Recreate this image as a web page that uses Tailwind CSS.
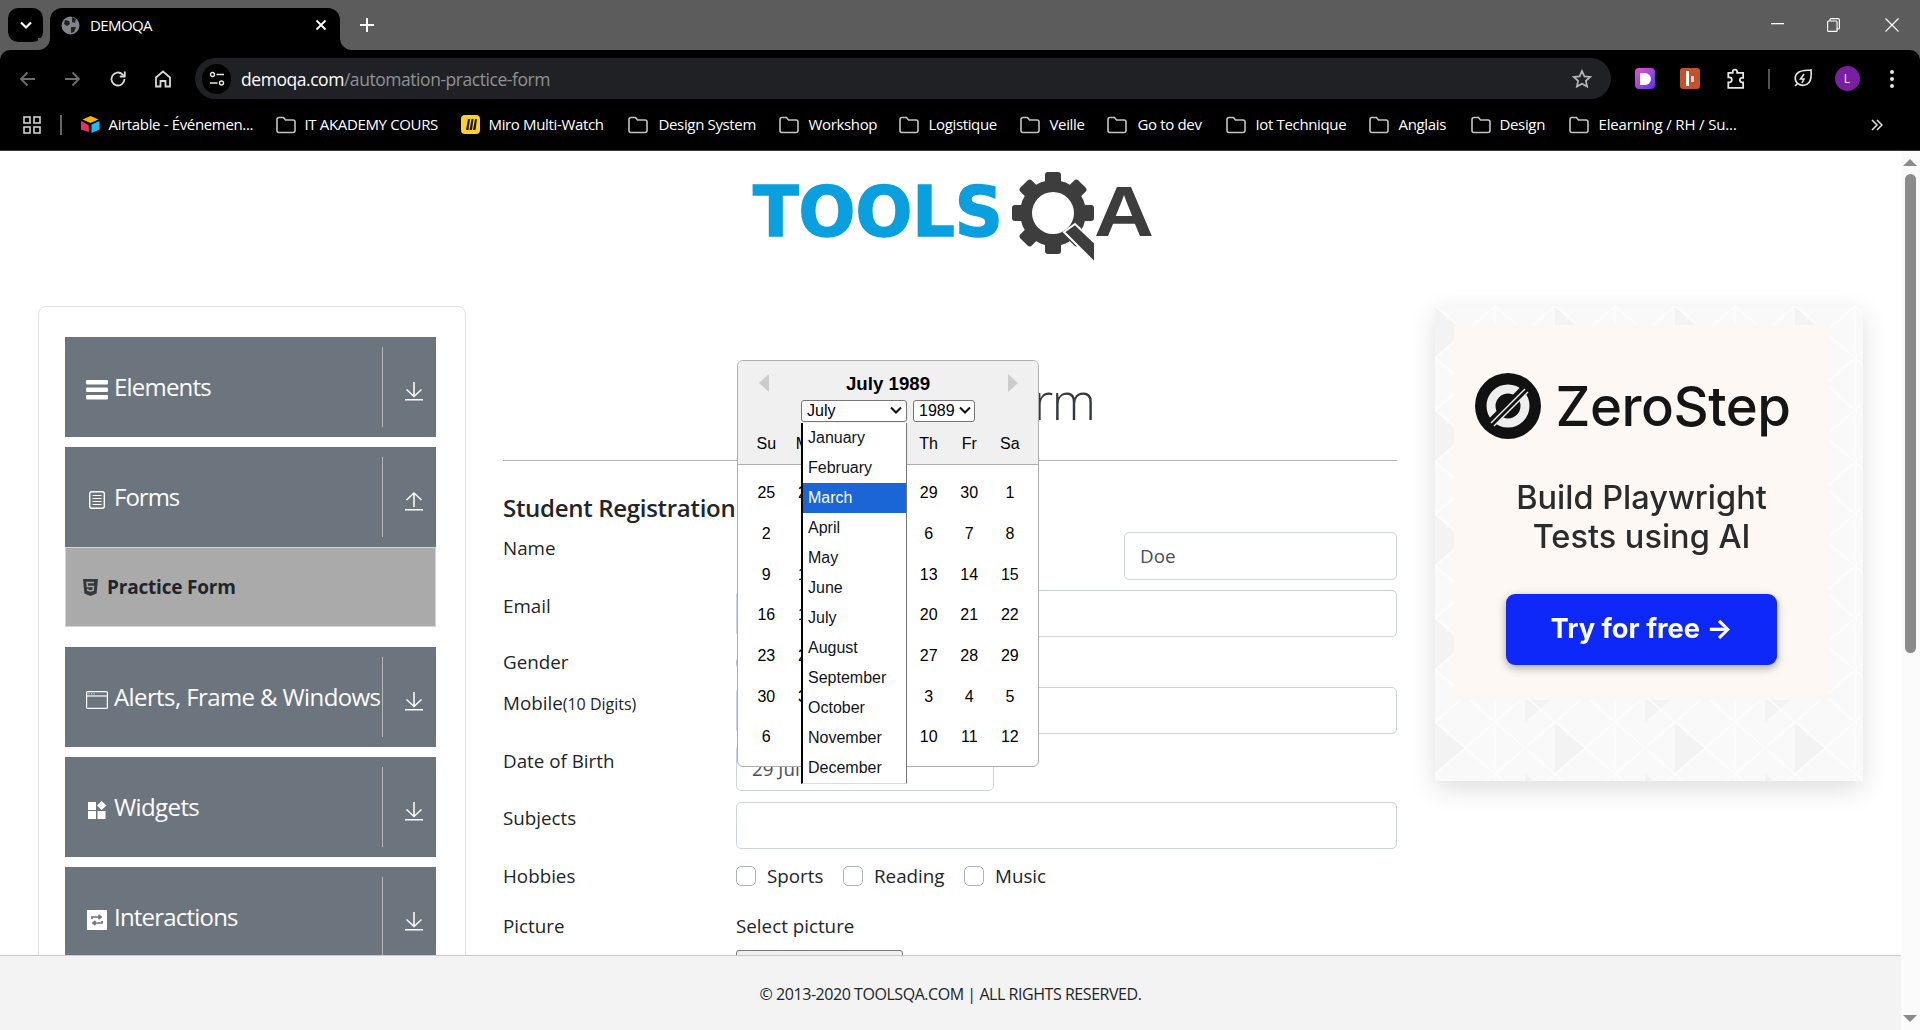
<!DOCTYPE html>
<html lang="en">
<head>
  <meta charset="UTF-8">
  <title>DEMOQA</title>
  <script src="https://cdn.jsdelivr.net/npm/@tailwindcss/browser@4"></script>
</head>
<body class="w-[1920px] h-[1030px] overflow-hidden flex flex-col bg-white text-[#212529] font-['Open_Sans',sans-serif]">

  <!-- browser tab strip -->
  <div class="h-[50px] shrink-0 bg-[#5c5c5c] flex items-start pt-[8px] pl-[8px] text-white relative">
    <div class="w-[35px] h-[34px] bg-black rounded-[10px] flex items-center justify-center">
      <svg width="14" height="14" viewBox="0 0 14 14" fill="none" stroke="#fff" stroke-width="2.2"><path d="M2 4.500l5 5 5-5"/></svg>
    </div>
    <div class="relative ml-[7px] w-[290px] h-[42px] bg-black rounded-t-[12px] flex items-center pl-[11px] pr-[13px] pb-[8px]">
      <div class="absolute right-full bottom-0 w-[12px] h-[12px] bg-black"><div class="w-full h-full bg-[#5c5c5c] rounded-br-[12px]"></div></div>
      <div class="absolute left-full bottom-0 w-[12px] h-[12px] bg-black"><div class="w-full h-full bg-[#5c5c5c] rounded-bl-[12px]"></div></div>
      <svg width="19" height="19" viewBox="0 0 19 19"><circle cx="9.500" cy="9.500" r="9" fill="#80858c"/><path d="M4 4l4 1 1 3-3 2-3-2zM11 1l4 2-1 4-3-1zM10 11l5 0-2 5-3 1z" fill="#000" opacity=".75"/></svg>
      <span class="ml-[10px] text-[15px] tracking-[-0.6px]">DEMOQA</span>
      <svg class="ml-auto" width="12" height="12" viewBox="0 0 12 12" stroke="#fff" stroke-width="1.800"><path d="M1.500 1.500l9 9M10.500 1.500l-9 9"/></svg>
    </div>
    <svg class="ml-[20px] mt-[10px]" width="14" height="14" viewBox="0 0 14 14" stroke="#fff" stroke-width="2"><path d="M7 0v14M0 7h14"/></svg>
    <svg class="absolute left-[1771px] top-[23px]" width="13" height="2"><rect width="13" height="1.300" fill="#fff"/></svg>
    <svg class="absolute left-[1827px] top-[18px]" width="13" height="14" viewBox="0 0 13 14" fill="none" stroke="#fff" stroke-width="1.100"><rect x=".6" y="3" width="9.500" height="10.400" rx="1"/><path d="M3 3V1.600q0-1 1-1h7q1.400 0 1.400 1.400v8q0 1-1 1h-2"/></svg>
    <svg class="absolute left-[1885px] top-[18px]" width="14" height="14" viewBox="0 0 14 14" stroke="#fff" stroke-width="1.200"><path d="M.5.500l13 13M13.500.500l-13 13"/></svg>
  </div>

  <!-- toolbar -->
  <div class="h-[50px] shrink-0 bg-[#5c5c5c]">
    <div class="h-full bg-black rounded-t-[10px] flex items-center relative pt-[8px] pb-[1px]">
      <svg class="ml-[18px]" width="20" height="20" viewBox="0 0 20 20" fill="none" stroke="#6e6e6e" stroke-width="1.800"><path d="M17 10H3M9.500 3.500L3 10l6.500 6.500"/></svg>
      <svg class="ml-[24px]" width="20" height="20" viewBox="0 0 20 20" fill="none" stroke="#6e6e6e" stroke-width="1.800"><path d="M3 10h14M10.500 3.500L17 10l-6.500 6.500"/></svg>
      <svg class="ml-[26px]" width="20" height="20" viewBox="0 0 20 20" fill="none" stroke="#d8d8d8" stroke-width="1.800"><path d="M16.500 10a6.500 6.500 0 1 1-2-4.700L16.500 7.300"/><path d="M16.800 2.500v5h-5"/></svg>
      <svg class="ml-[25px]" width="20" height="20" viewBox="0 0 20 20" fill="none" stroke="#d8d8d8" stroke-width="1.800"><path d="M3 8.500L10 2.500l7 6V17.500h-4.500V12h-5v5.500H3z"/></svg>
      <div class="ml-[22px] w-[1416px] h-[41px] bg-[#202124] rounded-full flex items-center pl-[7px] pr-[19px]">
        <div class="w-[29px] h-[30px] rounded-full bg-black flex items-center justify-center">
          <svg width="16" height="16" viewBox="0 0 16 16" fill="none" stroke="#e8e8e8" stroke-width="1.400"><circle cx="3.500" cy="3.500" r="2"/><path d="M7.500 3.500H15M1 12h7.500"/><circle cx="12.500" cy="12" r="2"/></svg>
        </div>
        <span class="ml-[10px] pt-[2px] text-[17.500px] tracking-[-0.45px] text-white">demoqa.com<span class="text-[#8f9296]">/automation-practice-form</span></span>
        <svg class="ml-auto" width="20" height="20" viewBox="0 0 20 20" fill="none" stroke="#b8b8b8" stroke-width="1.700"><path d="M10 2l2.400 5.400 5.800.6-4.300 3.900 1.200 5.700L10 14.700 4.900 17.600l1.200-5.700L1.800 8l5.800-.6z"/></svg>
      </div>
      <div class="ml-[24px] w-[20px] h-[21px] rounded-[4px] bg-gradient-to-br from-[#e84fd0] to-[#5a2de0] flex items-center justify-center">
        <div class="w-[11px] h-[12px] bg-white rounded-r-full"></div>
      </div>
      <div class="ml-[25px] w-[20px] h-[21px] rounded-[3px] bg-[#c2512d] flex items-center justify-center gap-[2px]">
        <div class="w-[3px] h-[15px] bg-white"></div><div class="w-[3px] h-[6px] bg-white/80"></div>
      </div>
      <svg class="ml-[25px]" width="22" height="22" viewBox="0 0 20 20" fill="none" stroke="#e6e6e6" stroke-width="1.600"><path d="M7 4.500V3.500a2 2 0 0 1 4 0v1h5.500v4.500h-1a2 2 0 0 0 0 4h1V18H3v-5h1a2.200 2.200 0 0 0 0-4.500H3V4.500z"/></svg>
      <div class="ml-[21px] w-[1.500px] h-[20px] bg-[#555]"></div>
      <svg class="ml-[22px]" width="21" height="21" viewBox="0 0 21 21" fill="none" stroke="#e6e6e6" stroke-width="1.600"><path d="M3 18l2.500-2.500C2 12 2.500 6.500 7 4c3.500-1.800 8-1.500 12-2 .5 5 .5 9.500-2 12.500-3 3.500-7.500 3.500-11.500 1"/><path d="M12 6l-3.500 5h3.500l-2 4"/></svg>
      <div class="ml-[22px] w-[25px] h-[25px] rounded-full bg-[#7b1fa2] flex items-center justify-center text-[12px] text-white/90">L</div>
      <svg class="ml-[29px]" width="6" height="20" viewBox="0 0 6 20" fill="#e6e6e6"><circle cx="3" cy="3" r="2"/><circle cx="3" cy="10" r="2"/><circle cx="3" cy="17" r="2"/></svg>
    </div>
  </div>

  <!-- bookmarks bar -->
  <div class="h-[51px] shrink-0 bg-black border-b border-[#3a3a3a] flex items-center pb-[1px] text-white text-[15px] tracking-[-0.35px] whitespace-nowrap">
    <svg class="ml-[23px]" width="18" height="18" viewBox="0 0 18 18" fill="none" stroke="#d0d0d0" stroke-width="1.600"><rect x="1" y="1" width="6" height="6"/><rect x="11" y="1" width="6" height="6"/><rect x="1" y="11" width="6" height="6"/><rect x="11" y="11" width="6" height="6"/></svg>
    <div class="ml-[19px] w-[1.500px] h-[20px] bg-[#666]"></div>
    <div class="ml-[19px] w-[195px] flex items-center gap-[9px]">
      <svg width="19" height="19" viewBox="0 0 19 19"><path d="M9.500 1L1.500 4.500l8 3.500 8-3.500z" fill="#fcb400"/><path d="M10.500 9.500v8.500l8-3.500V6z" fill="#18bfff"/><path d="M0 6v8.500l8 2.500-.5-7z" fill="#e8345c"/></svg>
      <span>Airtable - Événemen...</span>
    </div>
    <div class="w-[185px] flex items-center gap-[9px]">
      <svg width="20" height="18" viewBox="0 0 20 18" fill="none" stroke="#c4c4c4" stroke-width="1.600"><path d="M1 3.500q0-2 2-2h4.500l2 2.500H17q2 0 2 2V14.500q0 2-2 2H3q-2 0-2-2z"/></svg>
      <span>IT AKADEMY COURS</span>
    </div>
    <div class="w-[167px] flex items-center gap-[9px]">
      <svg width="19" height="19" viewBox="0 0 19 19"><rect width="19" height="19" rx="4" fill="#ffd02f"/><path d="M5 15L7 4h2L7.500 15zM8.500 15L10.500 4h2L11 15zM12 15L14 4h2L14.500 15z" fill="#1a1a1a"/></svg>
      <span>Miro Multi-Watch</span>
    </div>
    <div class="w-[151px] flex items-center gap-[11px]">
      <svg width="20" height="18" viewBox="0 0 20 18" fill="none" stroke="#c4c4c4" stroke-width="1.600"><path d="M1 3.500q0-2 2-2h4.500l2 2.500H17q2 0 2 2V14.500q0 2-2 2H3q-2 0-2-2z"/></svg>
      <span>Design System</span>
    </div>
    <div class="w-[120px] flex items-center gap-[10px]">
      <svg width="20" height="18" viewBox="0 0 20 18" fill="none" stroke="#c4c4c4" stroke-width="1.600"><path d="M1 3.500q0-2 2-2h4.500l2 2.500H17q2 0 2 2V14.500q0 2-2 2H3q-2 0-2-2z"/></svg>
      <span>Workshop</span>
    </div>
    <div class="w-[121px] flex items-center gap-[10px]">
      <svg width="20" height="18" viewBox="0 0 20 18" fill="none" stroke="#c4c4c4" stroke-width="1.600"><path d="M1 3.500q0-2 2-2h4.500l2 2.500H17q2 0 2 2V14.500q0 2-2 2H3q-2 0-2-2z"/></svg>
      <span>Logistique</span>
    </div>
    <div class="w-[87px] flex items-center gap-[10px]">
      <svg width="20" height="18" viewBox="0 0 20 18" fill="none" stroke="#c4c4c4" stroke-width="1.600"><path d="M1 3.500q0-2 2-2h4.500l2 2.500H17q2 0 2 2V14.500q0 2-2 2H3q-2 0-2-2z"/></svg>
      <span>Veille</span>
    </div>
    <div class="w-[119px] flex items-center gap-[11px]">
      <svg width="20" height="18" viewBox="0 0 20 18" fill="none" stroke="#c4c4c4" stroke-width="1.600"><path d="M1 3.500q0-2 2-2h4.500l2 2.500H17q2 0 2 2V14.500q0 2-2 2H3q-2 0-2-2z"/></svg>
      <span>Go to dev</span>
    </div>
    <div class="w-[143px] flex items-center gap-[10px]">
      <svg width="20" height="18" viewBox="0 0 20 18" fill="none" stroke="#c4c4c4" stroke-width="1.600"><path d="M1 3.500q0-2 2-2h4.500l2 2.500H17q2 0 2 2V14.500q0 2-2 2H3q-2 0-2-2z"/></svg>
      <span>Iot Technique</span>
    </div>
    <div class="w-[102px] flex items-center gap-[10px]">
      <svg width="20" height="18" viewBox="0 0 20 18" fill="none" stroke="#c4c4c4" stroke-width="1.600"><path d="M1 3.500q0-2 2-2h4.500l2 2.500H17q2 0 2 2V14.500q0 2-2 2H3q-2 0-2-2z"/></svg>
      <span>Anglais</span>
    </div>
    <div class="w-[98px] flex items-center gap-[9px]">
      <svg width="20" height="18" viewBox="0 0 20 18" fill="none" stroke="#c4c4c4" stroke-width="1.600"><path d="M1 3.500q0-2 2-2h4.500l2 2.500H17q2 0 2 2V14.500q0 2-2 2H3q-2 0-2-2z"/></svg>
      <span>Design</span>
    </div>
    <div class="flex items-center gap-[10px]">
      <svg width="20" height="18" viewBox="0 0 20 18" fill="none" stroke="#c4c4c4" stroke-width="1.600"><path d="M1 3.500q0-2 2-2h4.500l2 2.500H17q2 0 2 2V14.500q0 2-2 2H3q-2 0-2-2z"/></svg>
      <span class="tracking-[-0.15px]">Elearning / RH / Su...</span>
    </div>
    <svg class="ml-[134px]" width="12" height="12" viewBox="0 0 12 12" fill="none" stroke="#e0e0e0" stroke-width="1.500"><path d="M1 1l5 5-5 5M6 1l5 5-5 5"/></svg>
  </div>

  <!-- page -->
  <div class="flex-1 flex min-h-0">
    <div class="w-[1901px] flex flex-col">
      <div class="flex-1 min-h-0 overflow-hidden">
        <header class="h-[155px] flex justify-center pt-[21px]">
          <svg width="400" height="92" viewBox="0 0 400 92" class="ml-[3px] overflow-visible">
            <text x="1" y="64" font-family="DejaVu Sans" font-weight="700" font-size="70" textLength="250" lengthAdjust="spacingAndGlyphs" fill="#0a9fdf" stroke="#0a9fdf" stroke-width="1.500">TOOLS</text>
            <g fill="#3d3d3d">
              <circle cx="301" cy="41" r="33"/>
              <rect x="293" y="0" width="16" height="82" rx="3"/>
              <rect x="293" y="0" width="16" height="82" rx="3" transform="rotate(45 301 41)"/>
              <rect x="293" y="0" width="16" height="82" rx="3" transform="rotate(90 301 41)"/>
              <rect x="293" y="0" width="16" height="82" rx="3" transform="rotate(135 301 41)"/>
            </g>
            <circle cx="301" cy="41" r="21" fill="#fff"/>
            <path d="M312 60l11-8 20 19v20z" fill="#3d3d3d" stroke="#fff" stroke-width="2"/>
            <text x="342" y="64" font-family="Liberation Sans" font-weight="700" font-size="71" textLength="60" lengthAdjust="spacingAndGlyphs" fill="#3d3d3d">A</text>
          </svg>
        </header>
        <div class="flex pl-[38px]">

          <!-- left menu -->
          <aside class="w-[428px] shrink-0 border border-[#dfe1e3] rounded-[8px] pt-[30px] pl-[26px] pr-[29px] text-white text-[24px] tracking-[-0.6px]">
            <div class="h-[100px] bg-[#6c757d] flex items-center mb-[10px]">
              <div class="w-[317px] flex items-center pl-[21px]">
                <svg class="mt-[5px]" width="22" height="20" viewBox="0 0 22 20" fill="#fff"><rect width="22" height="4.500" rx="1"/><rect y="7.500" width="22" height="4.500" rx="1"/><rect y="15" width="22" height="4.500" rx="1"/></svg>
                <span class="ml-[6px] tracking-[-0.8px]">Elements</span>
              </div>
              <div class="w-px h-[80px] bg-[#b4b8bc]"></div>
              <svg class="ml-[22px] mt-[8px]" width="18" height="20" viewBox="0 0 18 20" fill="none" stroke="#fff" stroke-width="1.500"><path d="M9 1v14M1.500 8.500L9 15.500l7.500-7M0 18.800h18"/></svg>
            </div>
            <div class="h-[100px] bg-[#6c757d] flex items-center">
              <div class="w-[317px] flex items-center pl-[24px]">
                <svg class="mt-[5px]" width="16" height="18" viewBox="0 0 16 18" fill="none" stroke="#fff"><rect x=".7" y=".7" width="14.600" height="16.600" rx="2" stroke-width="1.400"/><path d="M3.500 4.500h9M3.500 7.500h9M3.500 10.500h9M3.500 13.500h9"/></svg>
                <span class="ml-[9px] tracking-[-1px]">Forms</span>
              </div>
              <div class="w-px h-[80px] bg-[#b4b8bc]"></div>
              <svg class="ml-[22px] mt-[8px]" width="18" height="20" viewBox="0 0 18 20" fill="none" stroke="#fff" stroke-width="1.500"><path d="M9 16V2M1.500 9L9 2l7.500 7M0 18.800h18"/></svg>
            </div>
            <div class="h-[80px] mb-[20px] bg-[#aaaaaa] border border-[#d2d5d8] flex items-center pl-[17px] text-[19px] font-bold tracking-[-0.2px] text-[#212529]">
              <svg width="15" height="17" viewBox="0 0 15 17"><path d="M0 0h15l-1.400 14.500L7.500 17 1.400 14.500z" fill="#33383d"/><path d="M11 3.500H4l.3 4h6.200l-.3 3.700-2.700.8-2.700-.8-.1-1.400" fill="none" stroke="#aaa" stroke-width="1.400"/></svg>
              <span class="ml-[9px]">Practice Form</span>
            </div>
            <div class="h-[100px] bg-[#6c757d] flex items-center mb-[10px]">
              <div class="w-[317px] flex items-center pl-[21px]">
                <svg class="mt-[5px]" width="22" height="18" viewBox="0 0 22 18" fill="none" stroke="#fff"><rect x=".6" y=".6" width="20.800" height="16.800" rx="1" stroke-width="1.200"/><path d="M.6 5h20.800" stroke-width="1.200"/><path d="M2.500 2.800h1M5 2.800h1M7.500 2.800h1"/></svg>
                <span class="ml-[6px]">Alerts, Frame &amp; Windows</span>
              </div>
              <div class="w-px h-[80px] bg-[#b4b8bc]"></div>
              <svg class="ml-[22px] mt-[8px]" width="18" height="20" viewBox="0 0 18 20" fill="none" stroke="#fff" stroke-width="1.500"><path d="M9 1v14M1.500 8.500L9 15.500l7.500-7M0 18.800h18"/></svg>
            </div>
            <div class="h-[100px] bg-[#6c757d] flex items-center mb-[10px]">
              <div class="w-[317px] flex items-center pl-[23px]">
                <svg class="mt-[5px]" width="19" height="18" viewBox="0 0 19 18" fill="#fff"><rect y="1" width="8" height="8"/><rect y="10" width="8" height="8"/><rect x="9.500" y="10" width="8" height="8"/><path d="M13.500 0l5 4.500-5 4.500-4.500-4.500z"/></svg>
                <span class="ml-[7px]">Widgets</span>
              </div>
              <div class="w-px h-[80px] bg-[#b4b8bc]"></div>
              <svg class="ml-[22px] mt-[8px]" width="18" height="20" viewBox="0 0 18 20" fill="none" stroke="#fff" stroke-width="1.500"><path d="M9 1v14M1.500 8.500L9 15.500l7.500-7M0 18.800h18"/></svg>
            </div>
            <div class="h-[100px] bg-[#6c757d] flex items-center mb-[10px]">
              <div class="w-[317px] flex items-center pl-[22px]">
                <svg class="mt-[5px]" width="20" height="20" viewBox="0 0 20 20"><rect width="20" height="20" fill="#fff"/><path d="M5 9V7h8.500M11.500 5l2.500 2-2.500 2M15 11v2H6.500M8.500 11L6 13l2.500 2" fill="none" stroke="#6c757d" stroke-width="1.700"/></svg>
                <span class="ml-[7px] tracking-[-0.8px]">Interactions</span>
              </div>
              <div class="w-px h-[80px] bg-[#b4b8bc]"></div>
              <svg class="ml-[22px] mt-[8px]" width="18" height="20" viewBox="0 0 18 20" fill="none" stroke="#fff" stroke-width="1.500"><path d="M9 1v14M1.500 8.500L9 15.500l7.500-7M0 18.800h18"/></svg>
            </div>
          </aside>

          <!-- form -->
          <main class="w-[894px] ml-[37px] shrink-0 text-[18.800px]">
            <h1 class="h-[155px] pt-[65px] text-center text-[50px] leading-[60px] font-light tracking-[-1.600px] text-[#343a40] border-b border-[#b5b5b5]">Practice Form</h1>
            <h5 class="h-[71px] pt-[30px] text-[24px] leading-[34px] font-semibold tracking-[-0.3px]">Student Registration Form</h5>
            <div class="flex h-[48px]">
              <label class="w-[233px] pt-[2px]">Name</label>
              <div class="ml-[388px] flex-1 border border-[#ced4da] rounded-[5px] flex items-center pl-[15px] text-[#495057]">Doe</div>
            </div>
            <div class="flex h-[47px] mt-[10px]">
              <label class="w-[233px] pt-[2px]">Email</label>
              <div class="flex-1 border border-[#ced4da] rounded-[5px]"></div>
            </div>
            <div class="flex h-[24px] mt-[14px] items-center">
              <label class="w-[233px] pb-[1px]">Gender</label>
              <span class="w-[20px] h-[20px] rounded-full border border-[#adb5bd]"></span>
            </div>
            <div class="flex h-[47px] mt-[12px]">
              <label class="w-[233px] pt-[2px]">Mobile<span class="text-[16px]">(10 Digits)</span></label>
              <div class="flex-1 border border-[#ced4da] rounded-[5px]"></div>
            </div>
            <div class="flex h-[47px] mt-[10px]">
              <label class="w-[233px] pt-[3px]">Date of Birth</label>
              <div class="w-[258px] border border-[#ced4da] rounded-[5px] flex items-center pl-[15px] pt-[4px] text-[#495057]">29 Jul 1989</div>
            </div>
            <div class="flex h-[47px] mt-[11px]">
              <label class="w-[233px] pt-[2px]">Subjects</label>
              <div class="flex-1 border border-[#ced4da] rounded-[5px]"></div>
            </div>
            <div class="flex h-[24px] mt-[15px] items-center">
              <label class="w-[233px]">Hobbies</label>
              <span class="w-[20px] h-[20px] rounded-[5px] border border-[#adb5bd]"></span>
              <span class="ml-[11px] w-[76px]">Sports</span>
              <span class="w-[20px] h-[20px] rounded-[5px] border border-[#adb5bd]"></span>
              <span class="ml-[11px] w-[90px]">Reading</span>
              <span class="w-[20px] h-[20px] rounded-[5px] border border-[#adb5bd]"></span>
              <span class="ml-[11px]">Music</span>
            </div>
            <div class="flex mt-[26px] h-[24px] items-center">
              <label class="w-[233px]">Picture</label>
              <span>Select picture</span>
            </div>
            <div class="ml-[233px] mt-[12px] w-[167px] h-[40px] bg-[#efefef] border border-[#767676] rounded-[3px]"></div>
          </main>

          <!-- ad -->
          <div class="relative w-[428px] h-[475px] ml-[38px] shrink-0 bg-[#f9f9f9] shadow-[0_8px_24px_rgba(0,0,0,0.13)] overflow-hidden">
            <svg class="absolute inset-0" width="428" height="475">
              <defs>
                <pattern id="tri" width="120" height="104" patternUnits="userSpaceOnUse">
                  <path d="M0 0l30 26L0 52zM90 52l30 26-30 26z" fill="#f3f3f3"/>
                  <path d="M0 0L120 104M120 0L0 104M60 0V104M0 52L60 0M60 104L120 52M0 52L60 104M60 0L120 52" fill="none" stroke="#fdfdfd" stroke-width="1.500"/>
                </pattern>
              </defs>
              <rect width="428" height="475" fill="url(#tri)"/>
            </svg>
            <div class="absolute left-[19px] top-[19px] w-[375px] h-[375px] bg-[#fdf8f3] flex flex-col items-center font-['Inter',sans-serif] blur-[0.4px]">
              <div class="flex items-center mt-[48px] -ml-[18px]">
                <svg width="66" height="66" viewBox="0 0 66 66">
                  <circle cx="33" cy="33" r="33" fill="#111"/>
                  <circle cx="33" cy="33" r="17" fill="none" stroke="#eee" stroke-width="9"/>
                  <path d="M15 51L51 15" stroke="#111" stroke-width="9"/>
                  <path d="M16 50L50 16" stroke="#eee" stroke-width="1.500"/>
                  <path d="M19 53L53 19" stroke="#eee" stroke-width="1.500"/>
                </svg>
                <span class="ml-[15px] text-[54.500px] leading-[66px] text-[#151515] font-medium tracking-[-0.5px]">ZeroStep</span>
              </div>
              <div class="mt-[39px] text-[32.500px] leading-[39px] text-center text-[#2b2b2b] font-medium">Build Playwright<br>Tests using AI</div>
              <div class="mt-[38px] w-[271px] h-[71px] bg-[#0d28f8] rounded-[9px] shadow-[0_3px_8px_rgba(0,0,0,0.35)] flex items-center justify-center text-white text-[27.300px] font-bold">Try for free →</div>
            </div>
          </div>
        </div>
      </div>
      <footer class="h-[75px] shrink-0 bg-[#f3f3f3] border-t border-[#cccccc] flex items-center justify-center pt-[1px] text-[16px] tracking-[-0.45px]">© 2013-2020 TOOLSQA.COM | ALL RIGHTS RESERVED.</footer>
    </div>

    <!-- scrollbar -->
    <div class="w-[19px] bg-[#fbfbfb] flex flex-col items-center pt-[8px] pb-[8px]">
      <div class="w-0 h-0 border-x-[7px] border-x-transparent border-b-[7px] border-b-[#8b8b8b] -ml-[1px]"></div>
      <div class="w-[11px] h-[479px] mt-[8px] rounded-full bg-[#8b8b8b] -ml-[1px]"></div>
      <div class="mt-auto w-0 h-0 border-x-[7px] border-x-transparent border-t-[7px] border-t-[#8b8b8b] -ml-[1px]"></div>
    </div>
  </div>

  <!-- date picker popup -->
  <div class="absolute left-[737px] top-[360px] w-[302px] h-[407px] bg-white border border-[#aeaeae] rounded-[6px] text-black text-[16px] font-['Liberation_Sans',sans-serif]">
    <div class="relative h-[104px] bg-[#f0f0f0] border-b border-[#aeaeae] rounded-t-[6px] pt-[13px]">
      <div class="absolute left-[21px] top-[13px] w-0 h-0 border-y-[9px] border-y-transparent border-r-[10px] border-r-[#cccccc]"></div>
      <div class="absolute left-[270px] top-[13px] w-0 h-0 border-y-[9px] border-y-transparent border-l-[10px] border-l-[#cccccc]"></div>
      <div class="h-[20px] leading-[20px] text-center text-[18.700px] font-bold">July 1989</div>
      <div class="flex mt-[6px] ml-[63px] gap-[6px]">
        <div class="relative">
          <select class="block appearance-none w-[106px] h-[22px] bg-white border border-[#767676] rounded-[3px] text-[16px] leading-[18px] pl-[5px]"><option>July</option></select>
          <svg class="absolute right-[5px] top-[6px]" width="12" height="9" viewBox="0 0 12 9" fill="none" stroke="#111" stroke-width="2"><path d="M1 1.500l5 5 5-5"/></svg>
        </div>
        <div class="relative">
          <select class="block appearance-none w-[62px] h-[22px] bg-white border border-[#767676] rounded-[3px] text-[16px] leading-[18px] pl-[5px]"><option>1989</option></select>
          <svg class="absolute right-[4px] top-[6px]" width="12" height="9" viewBox="0 0 12 9" fill="none" stroke="#111" stroke-width="2"><path d="M1 1.500l5 5 5-5"/></svg>
        </div>
      </div>
      <div class="grid grid-cols-[repeat(7,40.6px)] pl-[8px] mt-[10px] h-[24px] leading-[24px] text-center">
        <span>Su</span><span>Mo</span><span>Tu</span><span>We</span><span>Th</span><span>Fr</span><span>Sa</span>
      </div>
    </div>
    <div class="grid grid-cols-[repeat(7,40.6px)] auto-rows-[40.67px] items-center pl-[8px] pt-[8px] text-center">
      <span>25</span><span>26</span><span>27</span><span>28</span><span>29</span><span>30</span><span>1</span>
      <span>2</span><span>3</span><span>4</span><span>5</span><span>6</span><span>7</span><span>8</span>
      <span>9</span><span>10</span><span>11</span><span>12</span><span>13</span><span>14</span><span>15</span>
      <span>16</span><span>17</span><span>18</span><span>19</span><span>20</span><span>21</span><span>22</span>
      <span>23</span><span>24</span><span>25</span><span>26</span><span>27</span><span>28</span><span>29</span>
      <span>30</span><span>31</span><span>1</span><span>2</span><span>3</span><span>4</span><span>5</span>
      <span>6</span><span>7</span><span>8</span><span>9</span><span>10</span><span>11</span><span>12</span>
    </div>
    <!-- month select list, open -->
    <div class="absolute left-[63px] top-[62px] w-[106px] bg-white border-l-2 border-l-black border-r border-r-[#767676] border-b border-b-[#dddddd] text-[#10141c]">
      <div class="h-[30px] leading-[30px] pl-[5px]">January</div>
      <div class="h-[30px] leading-[30px] pl-[5px]">February</div>
      <div class="h-[30px] leading-[30px] pl-[5px] bg-[#1a66d6] text-white">March</div>
      <div class="h-[30px] leading-[30px] pl-[5px]">April</div>
      <div class="h-[30px] leading-[30px] pl-[5px]">May</div>
      <div class="h-[30px] leading-[30px] pl-[5px]">June</div>
      <div class="h-[30px] leading-[30px] pl-[5px]">July</div>
      <div class="h-[30px] leading-[30px] pl-[5px]">August</div>
      <div class="h-[30px] leading-[30px] pl-[5px]">September</div>
      <div class="h-[30px] leading-[30px] pl-[5px]">October</div>
      <div class="h-[30px] leading-[30px] pl-[5px]">November</div>
      <div class="h-[30px] leading-[30px] pl-[5px]">December</div>
    </div>
  </div>
</body>
</html>
